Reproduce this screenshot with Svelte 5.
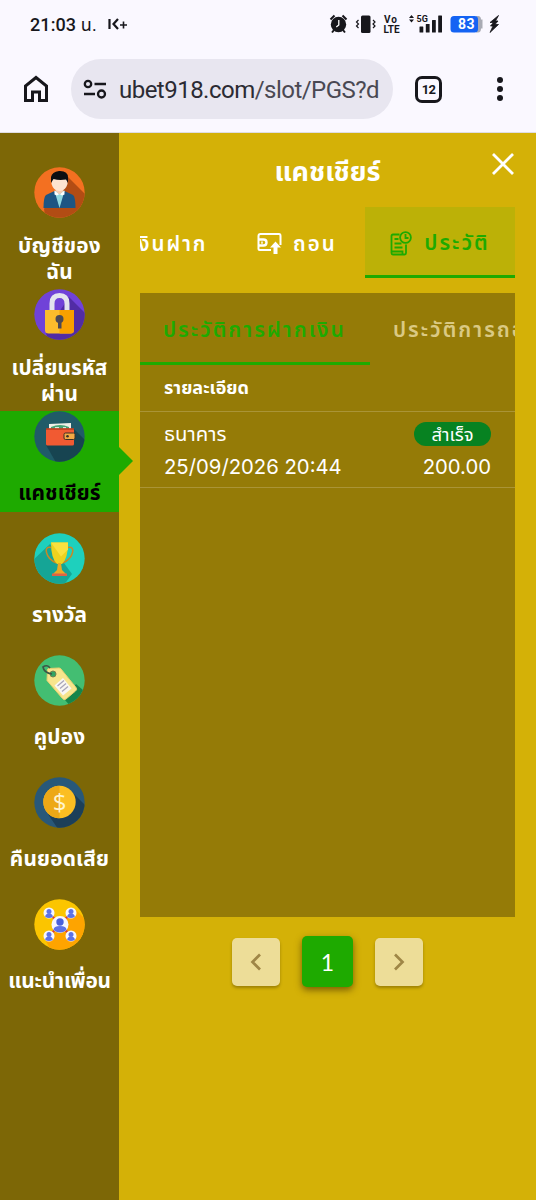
<script lang="ts">
	type MenuItem = { id: string; lines: string[]; spacing: number };

	const menu: MenuItem[] = [
		{ id: 'account', lines: ['บัญชีของ', 'ฉัน'], spacing: 0.2 },
		{ id: 'password', lines: ['เปลี่ยนรหัส', 'ผ่าน'], spacing: 0.1 },
		{ id: 'cashier', lines: ['แคชเชียร์'], spacing: 0.1 },
		{ id: 'reward', lines: ['รางวัล'], spacing: 0 },
		{ id: 'coupon', lines: ['คูปอง'], spacing: 0.2 },
		{ id: 'cashback', lines: ['คืนยอดเสีย'], spacing: 0.2 },
		{ id: 'referral', lines: ['แนะนำเพื่อน'], spacing: -0.2 },
	];

	let active = $state('cashier');

	const friends = [
		[15, 14],
		[37, 14],
		[15, 37],
		[37, 37],
	];

	const history = [
		{ method: 'ธนาคาร', date: '25/09/2026 20:44', status: 'สำเร็จ', amount: '200.00' },
	];
</script>

<div class="phone">
	<header class="browser">
		<div class="status">
			<span class="clock">21:03 <span class="unit">น.</span></span>
			<svg class="kplus" width="20" height="14" viewBox="0 0 20 14" fill="none" stroke="#17171c">
				<path d="M1.500 2v10M10 2L5.500 7l4.500 5" stroke-width="2.200" />
				<path d="M12 8h7M15.500 4.500v7" stroke-width="1.600" />
			</svg>
			<span class="spacer"></span>
			<svg class="status-icons" width="176" height="22" viewBox="328 13 176 22">
				<g fill="#17171c">
					<circle cx="338.500" cy="24.500" r="7.700" />
					<path d="M330.500 19.500l4-4M346.500 19.500l-4-4M334 30l-2 2.500M343 30l2 2.500" stroke="#17171c" stroke-width="2" />
					<path d="M338.800 20v5l-2.500 2" fill="none" stroke="#fff" stroke-width="1.300" />
					<rect x="361" y="15.500" width="9.500" height="17.500" rx="1.500" />
					<path d="M358.500 20l-2 2 2 2-2 2 2 2M373 20l2 2-2 2 2 2-2 2" fill="none" stroke="#17171c" stroke-width="1.200" />
					<text x="384" y="22.500" class="tiny" textLength="13">Vo</text>
					<text x="383.500" y="32.500" class="tiny" textLength="16">LTE</text>
					<path d="M409 18l2.500-3 2.500 3zM409 19.500l2.500 3 2.500-3z" />
					<text x="416.500" y="21.500" class="tiny small" textLength="11.500">5G</text>
					<rect x="419.500" y="26.500" width="3.800" height="6" rx=".5" />
					<rect x="425.800" y="24" width="3.800" height="8.500" rx=".5" />
					<rect x="432" y="20" width="3.800" height="12.500" rx=".5" />
					<rect x="438.200" y="15.500" width="3.800" height="17" rx=".5" />
					<path d="M498.500 15.500l-8.500 7h3.500l-3 3.500h2.500l-3 6.500 8.500-8h-3.500l3-3.500h-2.500z" stroke="#17171c" stroke-width=".8" />
				</g>
				<path d="M476 16h2q3 0 3 3.500h1.500v9H481q0 4-3 4h-2z" fill="#a9abb4" />
				<rect x="450.500" y="16" width="27.500" height="16.500" rx="3.500" fill="#1463f3" />
				<text x="458" y="29.300" class="battery" textLength="16.500">83</text>
			</svg>
		</div>
		<div class="toolbar">
			<svg width="26" height="28" viewBox="0 0 26 28" fill="none" stroke="#17171c" stroke-width="3">
				<path d="M2.500 25.500V11L13 2.500 23.500 11v14.500h-7V17h-7v8.500z" />
			</svg>
			<div class="address">
				<svg width="24" height="22" viewBox="0 0 24 22" fill="none" stroke="#17171c" stroke-width="2.300">
					<circle cx="5" cy="6" r="3.200" />
					<path d="M11.500 6H23M1 16h11" />
					<circle cx="18.500" cy="16" r="3.500" />
				</svg>
				<span class="url">ubet918.com<span>/slot/PGS?d</span></span>
			</div>
			<div class="tabs-count">12</div>
			<svg class="dots" width="8" height="26" viewBox="0 0 8 26" fill="#17171c">
				<circle cx="4" cy="4" r="3" /><circle cx="4" cy="13" r="3" /><circle cx="4" cy="22" r="3" />
			</svg>
		</div>
	</header>

	<div class="body">
		<nav class="sidebar">
			{#each menu as item}
				<div class="menu-cell">
					<button class="menu-item" class:active={active === item.id} onclick={() => (active = item.id)}>
						<svg width="51" height="51" viewBox="0 0 51 51">
							<clipPath id="round-{item.id}"><circle cx="25.500" cy="25.500" r="25.200" /></clipPath>
							<g clip-path="url(#round-{item.id})">
								{#if item.id === 'account'}
									<path d="M0 0h51v51H0z" fill="#f37021" />
									<path d="M32 8l24 24v22H12l-2-12z" fill="#b24c14" />
									<path d="M9.500 41q0-11 2.500-13l8.500-4h10l8.500 4q2.500 2 2.500 13z" fill="#1d5583" />
									<path d="M20.500 24l5 17 5-17z" fill="#8fd8e0" />
									<path d="M20.500 23.500l5 4 5-4v4l-2.500 1-2.500-1.500-2.500 1.500-2.500-1z" fill="#fff" />
									<path d="M21.500 19h8v5l-4 3.500-4-3.500z" fill="#f4cdb4" />
									<path d="M17.500 12h16v5q-2 7-8 7t-8-7z" fill="#fde3d0" />
									<path d="M17 16V10q1-5 8-6 9-.5 9 6.500v5.500l-2-3.500q-7 1-12.500-.5z" fill="#0d0e12" />
								{:else if item.id === 'password'}
									<path d="M0 0h51v51H0z" fill="#7042d8" />
									<path d="M35 8l24 24v27H15l-3-16z" fill="#512ca5" />
									<path d="M18 23V14.500q0-8 7.500-8t7.500 8V23" fill="none" stroke="#e3e4ee" stroke-width="5" />
									<path d="M11 21h29v20q0 3.500-3.500 3.500h-22Q11 44.500 11 41z" fill="#fbbd2c" />
									<path d="M25.500 21H40v20q0 3.500-3.500 3.500h-11z" fill="#f8a000" />
									<circle cx="25.500" cy="30" r="4" fill="#4c4954" />
									<path d="M24 32h3.500v7.500H24z" fill="#4c4954" />
								{:else if item.id === 'cashier'}
									<path d="M0 0h51v51H0z" fill="#205b68" />
									<path d="M40 18l24 24v20H28L12 34z" fill="#174451" />
									<path d="M15 13l22-1v8H15z" fill="#eef0e7" />
									<path d="M17 16q9-4 18 0v4H17z" fill="#45a477" />
									<path d="M21 17h4M29 17h3" stroke="#d4eadb" stroke-width="2" />
									<rect x="12" y="17.500" width="28" height="17" rx="1.500" fill="#f15a32" />
									<path d="M12 18h28" stroke="#b93e22" stroke-width="1.500" />
									<rect x="30" y="22" width="11" height="6.500" rx="1.500" fill="#f3a944" stroke="#3c3027" />
									<circle cx="33.500" cy="25.200" r="1.300" fill="#36302d" />
								{:else if item.id === 'reward'}
									<path d="M0 0h51v51H0z" fill="#1ed0bd" />
									<path d="M16 11L-4 30v30h28l14-19z" fill="#15a596" />
									<path d="M17 14.500q-6-1-4.500 5 1.500 7 10 10.500M34 14.500q6-1 4.500 5-1.500 7-10 10.500" fill="none" stroke="#c48a28" stroke-width="1.500" />
									<path d="M17 9.500h17q0 16-6 21.500h-5q-6-5.500-6-21.500z" fill="#eed21f" />
									<path d="M17 9.500h17v7l-7 7z" fill="#fae13f" />
									<path d="M24 30h3l1 7 4 4H19l4-4z" fill="#e9aa25" />
									<path d="M18 40.500h15v2.500H18z" fill="#df6245" />
								{:else if item.id === 'coupon'}
									<path d="M0 0h51v51H0z" fill="#43be72" />
									<path d="M42 29l14 12v12H38l-7-8z" fill="#16854a" />
									<path d="M13.500 15q0-1.500 1.500-1.500l10-.5q1 0 2 1l15 18.500q1.500 2-.5 3.500l-9.500 8q-2 1.500-3.500-.5L13 25.500z" fill="#f7e58c" stroke="#e9cf70" />
									<path d="M29 23l8.500 10.500-8.500 7-8.500-10z" fill="#f9f7f2" />
									<path d="M23.500 31l6.500-5.500M26 33.500l6-5M28 36.500l6-5" stroke="#a9a6b9" stroke-width="1.300" />
									<circle cx="19" cy="19" r="3" fill="#31a564" stroke="#76824e" />
									<path d="M18 19q-8-1-9-7 4-3 7 1" fill="none" stroke="#3d5547" stroke-width="1.600" />
								{:else if item.id === 'cashback'}
									<path d="M0 0h51v51H0z" fill="#285879" />
									<path d="M37 14l24 24v20H28L14 37z" fill="#1c3f59" />
									<circle cx="25.500" cy="25" r="16.200" fill="#fbbe22" />
									<path d="M25.500 8.800a16.200 16.200 0 0 0 0 32.400z" fill="#eda816" />
									<text x="25.500" y="33.500" text-anchor="middle" class="coin">$</text>
								{:else}
									<path d="M0 0h51v51H0z" fill="#fbc500" />
									<path d="M41 10l18 18v30H20L12 42z" fill="#fea400" />
									<path d="M15 14l22 23M37 14L15 37" stroke="#d93b32" stroke-width="2" />
									{#each friends as [x, y]}
										<circle cx={x} cy={y} r="5.500" fill="#f4f5ff" />
										<circle cx={x} cy={y - 1.5} r="2.500" fill="#5d72e6" />
										<path d="M{x - 3.8} {y + 4}q0-3.500 3.800-3.500t3.800 3.500q-3.800 2-7.600 0z" fill="#5d72e6" />
									{/each}
									<circle cx="26" cy="25.500" r="8.500" fill="#f4f5ff" />
									<circle cx="26" cy="23" r="3.700" fill="#4960dc" />
									<path d="M19.500 31q0-4 6.500-4t6.500 4q-6.500 5-13 0z" fill="#5d72e6" />
								{/if}
							</g>
						</svg>
						<span class="menu-label" class:single={item.lines.length === 1}>
							{#each item.lines as line}
								<span style="letter-spacing: {item.spacing}px">{line}</span>
							{/each}
						</span>
					</button>
				</div>
			{/each}
		</nav>

		<main class="cashier">
			<div class="title-row">
				<h1>แคชเชียร์</h1>
				<svg class="close" width="24" height="24" viewBox="0 0 24 24" stroke="#fff" stroke-width="2.800">
					<path d="M2 2l20 20M22 2L2 22" />
				</svg>
			</div>

			<div class="main-tabs">
				<div class="tab deposit"><span>เงินฝาก</span></div>
				<div class="tab withdraw">
					<svg width="25" height="22" viewBox="0 0 25 22" fill="none" stroke="#fff" stroke-width="2">
						<path d="M14 17H2.500q-1 0-1-1V3q0-2 2-2H22q1.500 0 1.500 2v9" />
						<path d="M1.500 6.500h5q3 0 3 3t-3 3h-5" stroke-width="2.400" />
						<path d="M5 8.500v2.200" stroke-width="1.500" />
						<path d="M18.500 8.500l5.500 6h-3.500V21h-4v-6.500H13z" fill="#fff" stroke="none" />
					</svg>
					<span>ถอน</span>
				</div>
				<div class="tab history">
					<svg width="22" height="25" viewBox="0 0 22 25" fill="none" stroke="#1eaa00" stroke-width="1.800">
						<path d="M9.500 3.500H3q-1.500 0-1.500 1.500v17q0 1.500 1.500 1.500h11.500q1.500 0 1.500-1.500v-8.500M2 20.500h10.500v3" />
						<circle cx="15.500" cy="6.500" r="5.400" />
						<path d="M15.500 3v4h3M4.500 8h4M4.500 12.500h7M4.500 16.500h8" />
					</svg>
					<span>ประวัติ</span>
				</div>
			</div>

			<section class="panel">
				<div class="sub-tabs">
					<div class="sub-tab selected"><span>ประวัติการฝากเงิน</span></div>
					<div class="sub-tab"><span>ประวัติการถอนเงิน</span></div>
				</div>
				<div class="detail-head">รายละเอียด</div>
				{#each history as row}
					<div class="record">
						<div class="record-line">
							<span class="method">{row.method}</span>
							<span class="pill">{row.status}</span>
						</div>
						<div class="record-line numbers">
							<span class="date">{row.date}</span>
							<span class="amount">{row.amount}</span>
						</div>
					</div>
				{/each}
			</section>

			<div class="pager">
				<button class="page" aria-label="ก่อนหน้า">
					<svg width="12" height="18" viewBox="0 0 12 18" fill="none" stroke="#9f8646" stroke-width="2.700"><path d="M10 1.500L2.500 9l7.500 7.500" /></svg>
				</button>
				<button class="page current">1</button>
				<button class="page" aria-label="ถัดไป">
					<svg width="12" height="18" viewBox="0 0 12 18" fill="none" stroke="#9f8646" stroke-width="2.700"><path d="M2 1.500L9.500 9 2 16.500" /></svg>
				</button>
			</div>
		</main>
	</div>
</div>

<style>
	:global(body) { margin: 0; }

	.phone {
		width: 536px;
		height: 1200px;
		overflow: hidden;
		font-family: Inter, 'Noto Sans Thai', 'Noto Sans', sans-serif;
		color: #fff;
	}

	button { border: 0; padding: 0; font: inherit; color: inherit; }
	svg { display: block; flex-shrink: 0; }

	/* Browser */
	.browser {
		height: 133px;
		box-sizing: border-box;
		background: #faf8ff;
		border-bottom: 1px solid #dedde2;
		color: #17171c;
		font-family: Roboto, 'Noto Sans Thai', sans-serif;
	}

	.status { display: flex; align-items: center; height: 48px; padding: 0 32px 0 30px; }
	.clock { padding-top: 2px; font-size: 18px; font-weight: 500; letter-spacing: 0.1px; white-space: nowrap; }
	.unit { font-weight: 400; }
	.kplus { margin-left: 11px; }
	.spacer { flex: 1; }
	.tiny { font: 700 10px Roboto, sans-serif; }
	.small { font-size: 9px; }
	.battery { font: 700 14px Roboto, sans-serif; fill: #fff; }

	.toolbar { display: flex; align-items: center; height: 60px; padding: 11px 32px 0 23px; }
	.address {
		display: flex;
		align-items: center;
		width: 322px;
		height: 60px;
		margin-left: 22px;
		padding-left: 12px;
		box-sizing: border-box;
		border-radius: 30px;
		background: #e8e6f0;
	}
	.url { margin-left: 12px; padding-top: 1px; font-size: 24px; letter-spacing: -0.52px; white-space: nowrap; color: #2b2b33; }
	.url span { color: #4a4953; }
	.tabs-count {
		display: grid;
		place-items: center;
		width: 27px;
		height: 27px;
		margin-left: 22px;
		box-sizing: border-box;
		border: 3px solid #17171c;
		border-radius: 7px;
		font-size: 13px;
		font-weight: 700;
		letter-spacing: -0.6px;
	}
	.dots { margin-left: auto; }

	/* Layout */
	.body { display: flex; height: 1067px; }
	.sidebar { width: 119px; padding-top: 34px; box-sizing: border-box; background: #7d6706; }
	.cashier { flex: 1; min-width: 0; padding: 0 21px; background: #d4b107; }

	.menu-cell { height: 122px; }
	.menu-item {
		position: relative;
		display: flex;
		flex-direction: column;
		align-items: center;
		width: 119px;
		height: 101px;
		background: none;
	}
	.menu-item.active { background: #1eaa00; color: #000; }
	.menu-item.active::after {
		content: '';
		position: absolute;
		left: 119px;
		top: 36px;
		border: 14px solid transparent;
		border-left-color: #1eaa00;
		border-right-width: 0;
	}
	.menu-label { display: flex; flex-direction: column; align-items: center; margin-top: 15px; font-size: 20.8px; font-weight: 700; line-height: 26px; white-space: nowrap; }
	.menu-label.single { margin-top: 18px; }
	.coin { font: 400 24px 'Open Sans', sans-serif; fill: #fff4ce; }

	/* Cashier */
	.title-row { position: relative; height: 74px; }
	h1 { margin: 0; padding-top: 19px; font-size: 27px; line-height: 40px; font-weight: 700; text-align: center; }
	.close { position: absolute; right: 0; top: 19px; }

	.main-tabs { display: flex; height: 71px; overflow: hidden; font-size: 20.5px; font-weight: 600; letter-spacing: 2px; white-space: nowrap; }
	.tab { display: flex; align-items: center; justify-content: center; box-sizing: border-box; padding-top: 3px; }
	.deposit { width: 88px; justify-content: flex-start; }
	.deposit span { margin-left: -10px; }
	.withdraw { width: 137px; padding-left: 29px; justify-content: flex-start; gap: 11px; }
	.history { width: 150px; gap: 12px; border-bottom: 3px solid #1eaa00; background: #bcb107; color: #1eaa00; padding-top: 5px; font-size: 21px; }

	.panel { height: 624px; margin-top: 15px; overflow: hidden; background: #957b07; }
	.sub-tabs { display: flex; height: 72px; font-size: 21px; font-weight: 600; letter-spacing: 2px; white-space: nowrap; }
	.sub-tab { flex: 0 0 230px; box-sizing: border-box; padding: 0 0 0 23px; line-height: 74px; color: #dac983; }
	.selected { border-bottom: 3px solid #1eaa00; color: #1eaa00; }
	.detail-head { height: 46px; padding-left: 24px; border-bottom: 1px solid #aa9436; font-size: 18px; line-height: 46px; font-weight: 700; }
	.record { height: 76px; box-sizing: border-box; padding: 6px 24px 0; border-bottom: 1px solid #aa9436; font-size: 20.3px; }
	.record-line { display: flex; justify-content: space-between; align-items: center; height: 32px; white-space: nowrap; }
	.pill { width: 77px; height: 24px; border-radius: 12px; background: #078221; font-size: 18.5px; line-height: 24px; text-align: center; }

	.pager { display: flex; align-items: center; justify-content: center; gap: 22px; margin-top: 19px; }
	.page { display: grid; place-items: center; width: 48px; height: 48px; border-radius: 5px; background: #eddd98; box-shadow: 0 2px 3px rgb(90 70 0 / 45%); }
	.current { width: 51px; height: 51px; background: #1eaa00; font-family: Lato, sans-serif; font-size: 23px; box-shadow: 0 3px 7px rgb(70 50 0 / 65%); }
</style>
